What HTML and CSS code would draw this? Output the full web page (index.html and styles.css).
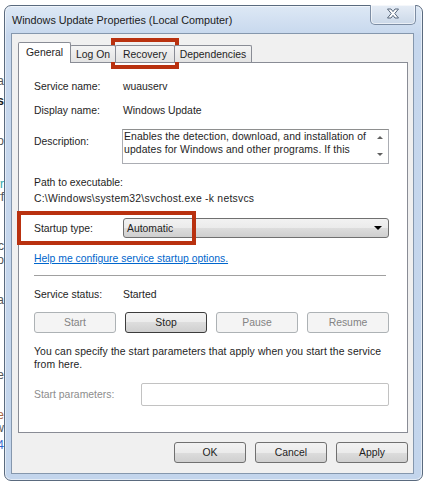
FILE: index.html
```html
<!DOCTYPE html>
<html lang="en">
<head>
    <meta charset="UTF-8">
    <title>Windows Update Properties (Local Computer)</title>
    <link rel="stylesheet" href="styles.css">
</head>
<body>

    <!-- bits of the window behind -->
    <div class="behind">
        <div class="frag" style="margin-top:70px">ra</div>
        <div class="frag bold" style="margin-top:7px">ss</div>
        <div class="frag" style="margin-top:27px">lo</div>
        <div class="frag teal" style="margin-top:30px">rr</div>
        <div class="frag" style="margin-top:0px">rf</div>
        <div class="frag" style="margin-top:36px">lc</div>
        <div class="frag" style="margin-top:1px">lo</div>
        <div class="frag" style="margin-top:27px">ra</div>
        <div class="frag" style="margin-top:62px">re</div>
        <div class="frag brown" style="margin-top:27px">ie</div>
        <div class="frag" style="margin-top:0px">rw</div>
        <div class="frag blue" style="margin-top:4px">4</div>
    </div>

    <div class="window">
        <div class="titlebar">
            <span class="title">Windows Update Properties (Local Computer)</span>
            <div class="close">
                <svg width="14" height="11" viewBox="0 0 14 11">
                    <path d="M1.5 1 L5 1 L7 3.6 L9 1 L12.5 1 L8.8 5.5 L12.5 10 L9 10 L7 7.4 L5 10 L1.5 10 L5.2 5.5 Z" fill="#fff" stroke="#55657a" stroke-width="1" stroke-linejoin="round"/>
                </svg>
            </div>
        </div>

        <div class="client">
            <div class="tabs">
                <div class="tab active" style="width:53px">General</div>
                <div class="tab" style="width:46px">Log On</div>
                <div class="tab" style="width:60px">Recovery</div>
                <div class="tab" style="width:78px">Dependencies</div>
            </div>

            <div class="panel">
                <div class="row">
                    <span class="label">Service name:</span>
                    <span>wuauserv</span>
                </div>
                <div class="row gap11">
                    <span class="label">Display name:</span>
                    <span>Windows Update</span>
                </div>
                <div class="row desc-row">
                    <span class="label desc-label">Description:</span>
                    <div class="desc">
                        <div class="desc-view">
                            <div class="desc-text">Enables the detection, download, and installation of updates for Windows and other programs. If this service is disabled, users of this computer will not be able to use Windows Update.</div>
                        </div>
                        <div class="scroll">
                            <span class="arrow-up"></span>
                            <span class="arrow-down"></span>
                        </div>
                    </div>
                </div>
                <div class="path">
                    <div>Path to executable:</div>
                    <div class="path-value">C:\Windows\system32\svchost.exe -k netsvcs</div>
                </div>
                <div class="row startup">
                    <span class="label">Startup type:</span>
                    <div class="combo">
                        <span>Automatic</span>
                        <span class="combo-arrow"></span>
                    </div>
                </div>
                <a class="help" href="#">Help me configure service startup options.</a>
                <div class="sep"></div>
                <div class="row status">
                    <span class="label">Service status:</span>
                    <span>Started</span>
                </div>
                <div class="svc-buttons">
                    <button class="btn" disabled>Start</button>
                    <button class="btn focus">Stop</button>
                    <button class="btn" disabled>Pause</button>
                    <button class="btn" disabled>Resume</button>
                </div>
                <p class="note">You can specify the start parameters that apply when you start the service<br>from here.</p>
                <div class="row params">
                    <span class="label grey">Start parameters:</span>
                    <div class="param-box"></div>
                </div>
            </div>

            <div class="actions">
                <button class="btn">OK</button>
                <button class="btn">Cancel</button>
                <button class="btn">Apply</button>
            </div>
        </div>
    </div>

    <!-- red highlight boxes drawn over the dialog -->
    <div class="mark mark-recovery"></div>
    <div class="mark mark-startup"></div>

</body>
</html>
```

FILE: styles.css
```css
body {
    margin: 0;
    height: 483px;
    box-sizing: border-box;
    padding-top: 5px;
    display: flex;
    align-items: flex-start;
    overflow: hidden;
    position: relative;
    background: #fff;
    font-family: "Liberation Sans", Arial, sans-serif;
    font-size: 10.4px;
    color: #1e1e1e;
}

/* Window behind the dialog */
.behind {
    width: 4px;
    flex: none;
    overflow: hidden;
    line-height: 13px;
    color: #555;
    font-size: 12px;
}

.frag {
    display: flex;
    justify-content: flex-end;
    white-space: nowrap;
}

.bold { font-weight: bold; color: #222; }
.teal { color: #3aa; }
.brown { color: #a64; }
.blue { color: #36c; }

/* Window frame */
.window {
    width: 419px;
    height: 476px;
    flex: none;
    box-sizing: border-box;
    border: 1px solid #5a6a7e;
    border-radius: 7px;
    padding: 0 8px 6px 6px;
    background: linear-gradient(#dde8f5, #c6d7ed 30px, #c3d5ec);
    box-shadow: inset 0 0 0 1px rgba(255, 255, 255, 0.55);
    display: flex;
    flex-direction: column;
}

.titlebar {
    height: 27px;
    flex: none;
    display: flex;
    justify-content: space-between;
    align-items: flex-start;
}

.title {
    margin: 8px 0 0 1px;
    font-size: 10.8px;
    line-height: 13px;
    color: #1b1b1b;
}

.close {
    width: 46px;
    height: 20px;
    margin: -1px -2px 0 0;
    box-sizing: border-box;
    border: 1px solid #7d8da3;
    border-top: none;
    border-radius: 0 0 5px 5px;
    background: linear-gradient(#e6edf6, #cbd8e8);
    box-shadow: inset 0 0 0 1px rgba(255, 255, 255, 0.6);
    display: flex;
    align-items: center;
    justify-content: center;
}

.close svg {
    display: block;
    margin-top: -2px;
}

/* Dialog area */
.client {
    height: 441px;
    flex: none;
    box-sizing: border-box;
    border: 1px solid #8597ad;
    background: #f0f0f0;
    padding: 8px 5px 0 6px;
}

.tabs {
    display: flex;
    align-items: flex-end;
    height: 21px;
    margin-bottom: -1px;
    position: relative;
    z-index: 1;
}

.tab {
    height: 17px;
    margin-bottom: 1px;
    box-sizing: border-box;
    border: 1px solid #898c95;
    border-bottom: none;
    border-radius: 2px 2px 0 0;
    background: linear-gradient(#f4f4f4, #e3e3e3);
    display: flex;
    align-items: center;
    justify-content: center;
    line-height: 13px;
}

.tab + .tab {
    margin-left: -1px;
}

.tab.active {
    height: 21px;
    margin-bottom: 0;
    background: #fff;
    padding-bottom: 1px;
    z-index: 1;
}

.panel {
    height: 371px;
    box-sizing: border-box;
    background: #fff;
    border: 1px solid #898c95;
    padding: 17px 18px 0 15px;
}

.row {
    display: flex;
    align-items: center;
    line-height: 13px;
}

.label {
    width: 89px;
    flex: none;
}

.gap11 { margin-top: 11px; }

.desc-row {
    margin-top: 12px;
    align-items: flex-start;
}

.desc-label {
    padding-top: 6px;
}

.desc {
    width: 267px;
    height: 35px;
    margin-left: -1px;
    box-sizing: border-box;
    border: 1px solid #abadb3;
    border-top-color: #8e8f8f;
    display: flex;
}

.desc-view {
    flex: 1;
    height: 26px;
    margin-top: 1px;
    overflow: hidden;
}

.desc-text {
    padding-left: 1px;
    line-height: 12.5px;
    letter-spacing: 0.1px;
}

.scroll {
    width: 16px;
    flex: none;
    display: flex;
    flex-direction: column;
    align-items: center;
    justify-content: space-between;
    padding: 6px 0 7px;
    box-sizing: border-box;
}

.arrow-up,
.arrow-down {
    width: 0;
    height: 0;
    border-left: 3px solid transparent;
    border-right: 3px solid transparent;
}

.arrow-up { border-bottom: 3px solid #606060; }
.arrow-down { border-top: 3px solid #606060; }

.path {
    margin-top: 11px;
    line-height: 16px;
}

.path-value {
    letter-spacing: 0.24px;
}

.startup {
    margin-top: 11px;
}

.combo {
    width: 266px;
    height: 20px;
    box-sizing: border-box;
    border: 1px solid #707070;
    border-radius: 3px;
    background: linear-gradient(#f2f2f2, #ebebeb 50%, #dddddd 50%, #cfcfcf);
    padding: 0 6px 0 3px;
    display: flex;
    align-items: center;
    justify-content: space-between;
}

.combo-arrow {
    width: 0;
    height: 0;
    border-left: 4px solid transparent;
    border-right: 4px solid transparent;
    border-top: 4px solid #000;
}

.help {
    display: inline-block;
    margin-top: 14px;
    line-height: 13px;
    color: #0066cc;
}

.sep {
    width: 352px;
    height: 1px;
    margin-top: 10px;
    background: #a0a0a0;
}

.status {
    margin-top: 12px;
}

.svc-buttons {
    display: grid;
    grid-template-columns: repeat(4, 82px);
    gap: 9px;
    margin-top: 11px;
}

.btn {
    height: 21px;
    padding: 0;
    box-sizing: border-box;
    border: 1px solid #707070;
    border-radius: 3px;
    background: linear-gradient(#f2f2f2, #ebebeb 50%, #dddddd 50%, #cfcfcf);
    font-family: inherit;
    font-size: 10.4px;
    color: #1e1e1e;
}

.btn.focus {
    border-color: #3c3c3c;
}

.btn:disabled {
    border-color: #adb2b5;
    background: #f4f4f4;
    color: #838383;
}

.note {
    margin: 12px -10px 0 0;
    line-height: 13px;
    white-space: nowrap;
    letter-spacing: 0.1px;
}

.params {
    margin-top: 12px;
}

.grey {
    color: #8d8d8d;
    width: 107px;
}

.param-box {
    width: 248px;
    height: 23px;
    box-sizing: border-box;
    border: 1px solid #c2c2c2;
    border-radius: 2px;
    background: #fff;
}

.actions {
    display: flex;
    justify-content: flex-end;
    gap: 9px;
    margin-top: 9px;
}

.actions .btn {
    width: 72px;
}

/* Red annotation boxes */
.mark {
    position: absolute;
    box-sizing: border-box;
    border: 4px solid #b9310f;
}

.mark-recovery {
    left: 111px;
    top: 38px;
    width: 68px;
    height: 31px;
}

.mark-startup {
    left: 17px;
    top: 211px;
    width: 179px;
    height: 34px;
}
```
